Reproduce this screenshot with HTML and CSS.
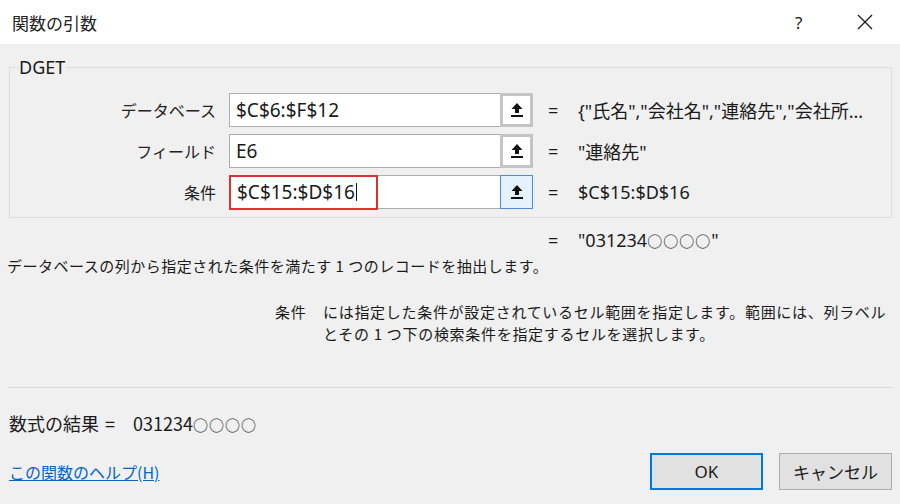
FILE: index.html
```html
<!DOCTYPE html>
<html lang="ja">
<head>
    <meta charset="UTF-8">
    <title>関数の引数</title>
    <link rel="stylesheet" href="styles.css">
</head>
<body>
<div class="dialog">
    <div class="titlebar">
        <span class="title">関数の引数</span>
        <span class="help-btn">?</span>
        <span class="close-btn">
            <svg width="16" height="16" viewBox="0 0 16 16"><path d="M1 1L15 15M15 1L1 15" stroke="#1a1a1a" stroke-width="1.3" fill="none"/></svg>
        </span>
    </div>

    <div class="content">
        <fieldset class="args">
            <legend>DGET</legend>
            <div class="arg-grid">
                <label class="arg-label">データベース</label>
                <div class="arg-field">$C$6:$F$12</div>
                <div class="ref-btn"><span class="ref-inner"><svg width="14" height="16" viewBox="0 0 14 16"><path d="M7 1L1.5 7H5V11H9V7H12.5Z" fill="#111"/><rect x="1" y="13" width="12" height="2" fill="#111"/></svg></span></div>
                <span class="arg-eq">=</span>
                <span class="arg-value">{"氏名","会社名","連絡先","会社所...</span>

                <label class="arg-label">フィールド</label>
                <div class="arg-field">E6</div>
                <div class="ref-btn"><span class="ref-inner"><svg width="14" height="16" viewBox="0 0 14 16"><path d="M7 1L1.5 7H5V11H9V7H12.5Z" fill="#111"/><rect x="1" y="13" width="12" height="2" fill="#111"/></svg></span></div>
                <span class="arg-eq">=</span>
                <span class="arg-value">"連絡先"</span>

                <label class="arg-label">条件</label>
                <div class="arg-field"><span class="hl">$C$15:$D$16<i class="caret"></i></span></div>
                <div class="ref-btn active"><span class="ref-inner"><svg width="14" height="16" viewBox="0 0 14 16"><path d="M7 1L1.5 7H5V11H9V7H12.5Z" fill="#111"/><rect x="1" y="13" width="12" height="2" fill="#111"/></svg></span></div>
                <span class="arg-eq">=</span>
                <span class="arg-value">$C$15:$D$16</span>
            </div>
        </fieldset>

        <div class="total"><span class="arg-eq">=</span><span class="arg-value">"031234<span class="maru">○○○○</span>"</span></div>
        <p class="summary">データベースの列から指定された条件を満たす 1 つのレコードを抽出します。</p>

        <div class="param-help">
            <span class="param-name">条件</span>
            <p class="param-text">には指定した条件が設定されているセル範囲を指定します。範囲には、列ラベルとその 1 つ下の検索条件を指定するセルを選択します。</p>
        </div>

        <hr class="sep">

        <div class="result">数式の結果 <span class="res-eq">=</span>031234<span class="maru">○○○○</span></div>

        <div class="footer">
            <a class="help-link" href="#">この関数のヘルプ(H)</a>
            <div class="buttons">
                <button class="btn primary">OK</button>
                <button class="btn">キャンセル</button>
            </div>
        </div>
    </div>
</div>
</body>
</html>
```

FILE: styles.css
```css
* {margin: 0; padding: 0; box-sizing: border-box;}
body {width: 900px; height: 504px; overflow: hidden; background: #f0f0f0; font-family: "Noto Sans", "Noto Sans CJK JP", sans-serif; color: #1a1a1a;}

.titlebar {height: 44px; background: #fff; display: flex; align-items: center; padding-left: 12px;}
.title {font-size: 17px; flex: 1; font-family: "Noto Sans CJK JP", sans-serif; color: #222;}
.help-btn {font-size: 17px; width: 20px; margin-right: 42px; color: #222;}
.close-btn {width: 16px; margin-right: 27px; display: flex;}

.content {padding: 0 8px 0 9px;}

.args {border: 1px solid #dcdcdc; margin-top: 14px; padding: 17px 0 8px 0;}
.args legend {font-size: 18px; margin-left: 8px; padding: 0 1px; line-height: 18px;}

.arg-grid {display: grid; grid-template-columns: 219px 271px 33px 45px 1fr; grid-auto-rows: 34px; row-gap: 7px; align-items: center;}
.arg-label {font-size: 16px; text-align: right; padding-right: 13px; font-family: "Noto Sans CJK JP", sans-serif; color: #222;}
.arg-field {height: 34px; background: #fff; border: 1px solid #adadad; border-right: none; font-size: 19px; padding-left: 6px; display: flex; align-items: center;}
.arg-field .hl {height: 35px; margin: 0 0 0 -7px; padding-left: 6px; width: 149px; border: 2px solid #e0322c; display: flex; align-items: center;}
.caret {display: inline-block; width: 1px; height: 18px; background: #111; margin-left: 1px;}

.ref-btn {height: 34px; border: 3px solid #c4c4c4; background: #fff; display: flex; align-items: center; justify-content: center;}
.ref-btn.active {border: 1px solid #4a90d9; background: #e5f1fb;}
.ref-inner {display: flex;}

.arg-eq {font-size: 18px; padding-left: 15px;}
.arg-value {font-size: 18px; white-space: nowrap;}
.maru {font-size: 15px; font-family: "Noto Sans CJK JP", sans-serif; letter-spacing: 1px;}

.total {margin-top: 11px; padding-left: 524px; height: 22px; display: flex; align-items: center;}
.total .arg-eq {width: 45px;}

.summary {font-size: 15px; line-height: 22px; margin: 4px 0 0 -2px; letter-spacing: 0.5px; font-family: "Noto Sans CJK JP", sans-serif;}

.param-help {display: flex; margin-top: 24px; padding-left: 266px; font-size: 15px; line-height: 22px; letter-spacing: 0.7px; font-family: "Noto Sans CJK JP", sans-serif;}
.param-name {width: 48px; flex: none;}
.param-text {width: 580px;}

.sep {border: none; border-top: 1px solid #dadada; margin-top: 42px; margin-left: -1px;}

.result {margin-top: 23px; font-size: 18px; line-height: 24px; font-family: "Noto Sans CJK JP", sans-serif;}
.res-eq {display: inline-block; width: 30px; padding-left: 2px;}

.footer {display: flex; align-items: center; justify-content: space-between; margin-top: 16px;}
.help-link {font-size: 16px; color: #0066cc; font-family: "Noto Sans CJK JP", sans-serif;}
.buttons {display: flex; gap: 16px;}
.btn {width: 113px; height: 37px; font-family: inherit; font-size: 17px; background: #e1e1e1; border: 1px solid #adadad; color: #1a1a1a;}
.btn.primary {border: 2px solid #0078d7;}
```
